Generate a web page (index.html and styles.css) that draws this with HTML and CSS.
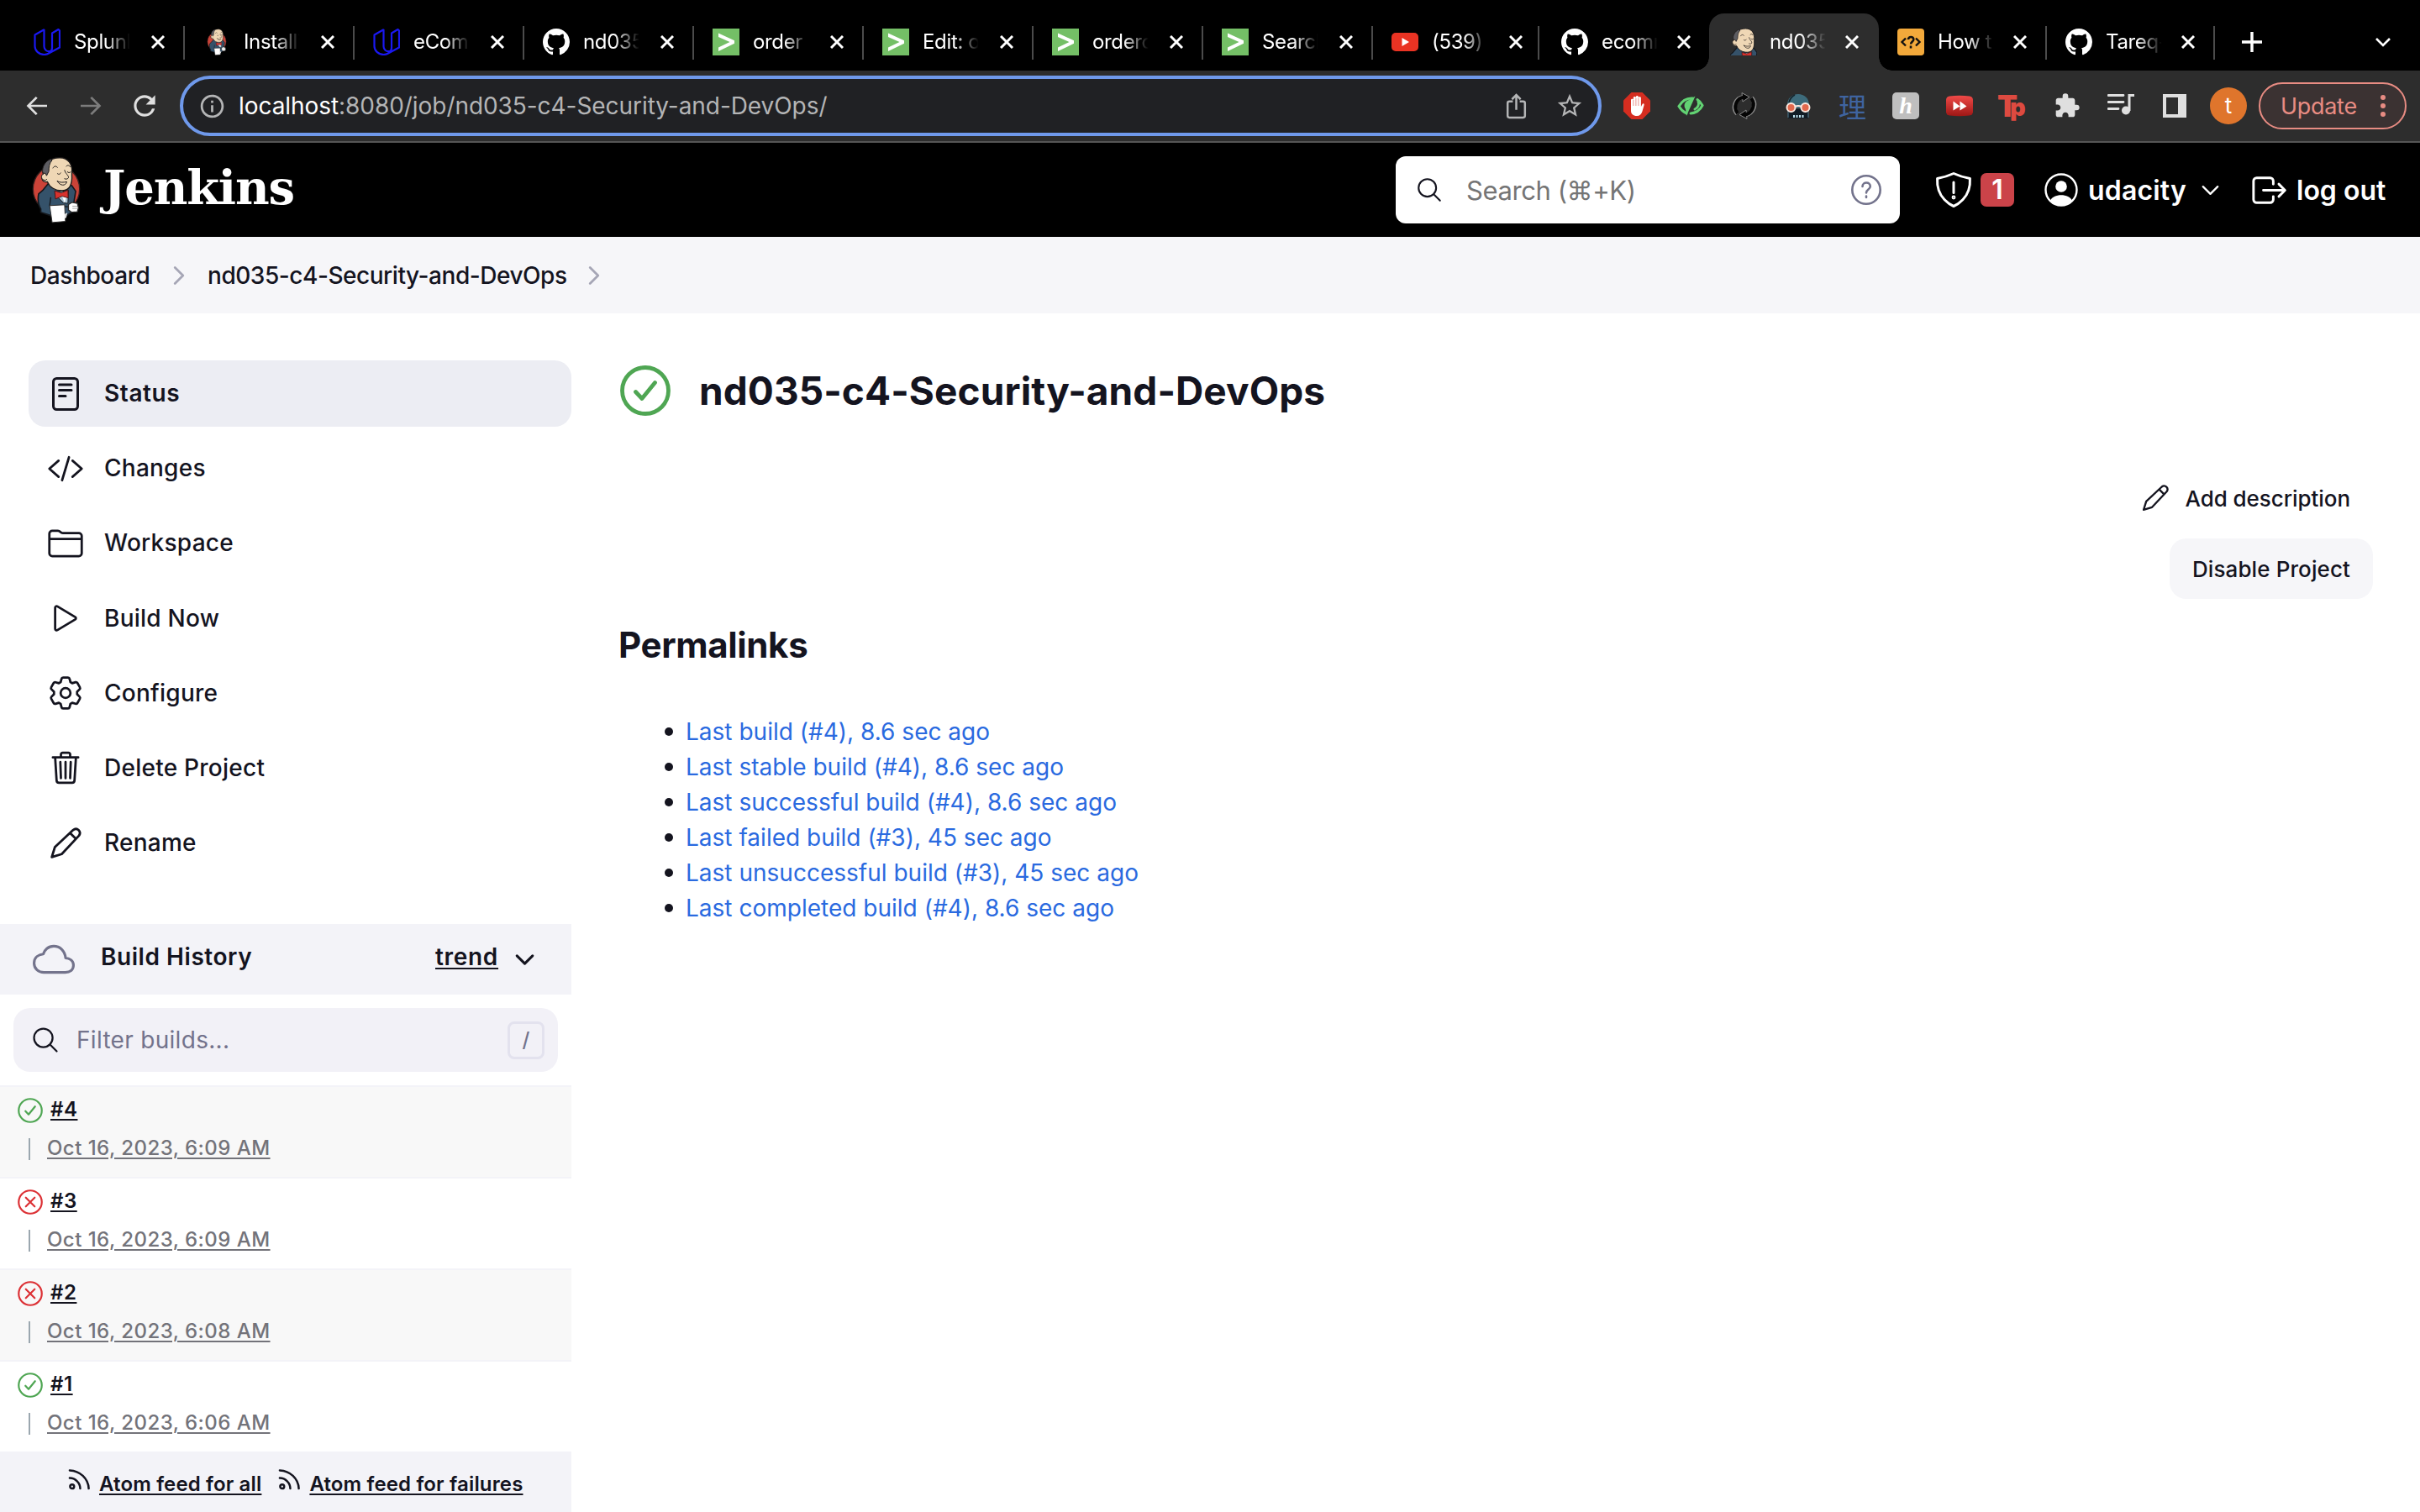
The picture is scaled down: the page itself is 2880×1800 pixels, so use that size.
FILE: index.html
```html
<!DOCTYPE html>
<html lang="en">
<head>
<meta charset="utf-8">
<title>nd035-c4-Security-and-DevOps [Jenkins]</title>
<link rel="stylesheet" href="styles.css">
</head>
<body>
<svg class="sprite" aria-hidden="true">
  <symbol id="udacity" viewBox="0 0 32 32"><path d="M12 1.500L1.500 7.500V21c0 5 4.500 10 11 10 2 0 4-.6 5.500-1.500L31 22.500V2.500L29.500 1 22 5.500v18c0 2-2 3.700-4 3.700s-5.500-2-5.500-6V1.500zM18 29.500c2.500-1.500 4-4 4-7" fill="none" stroke="#1a18f0" stroke-width="2.200" stroke-linejoin="round"/></symbol>
  <symbol id="github" viewBox="0 0 16 16"><path fill="#fff" d="M8 0C3.580 0 0 3.580 0 8c0 3.540 2.290 6.530 5.470 7.590.4.070.55-.17.55-.38 0-.19-.01-.82-.01-1.490-2.010.37-2.530-.49-2.690-.94-.09-.23-.48-.94-.82-1.130-.28-.15-.68-.52-.01-.53.630-.01 1.080.58 1.230.82.720 1.210 1.870.87 2.330.66.070-.52.280-.87.510-1.070-1.780-.2-3.640-.89-3.640-3.950 0-.87.310-1.590.820-2.150-.08-.2-.36-1.020.080-2.120 0 0 .67-.21 2.200.82.640-.18 1.320-.27 2-.27.680 0 1.360.09 2 .27 1.530-1.040 2.200-.82 2.200-.82.440 1.100.160 1.920.080 2.120.510.56.820 1.270.820 2.150 0 3.070-1.870 3.750-3.650 3.950.290.25.540.73.540 1.480 0 1.070-.01 1.930-.01 2.200 0 .21.150.46.550.38A8.013 8.013 0 0016 8c0-4.420-3.580-8-8-8z"/></symbol>
  <symbol id="splunk" viewBox="0 0 32 32"><path fill="#74bf66" d="M0 0h32v32H0z"/><path d="M7 5.500l19 8.700v3.600L7 27v-4.500L20.500 16 7 10z" fill="#fff"/></symbol>
  <symbol id="youtube" viewBox="0 0 32 32"><rect y="5" width="32" height="22" rx="5" fill="#ea3323"/><path d="M12.500 11v10l8.500-5z" fill="#fff"/></symbol>
  <symbol id="howto" viewBox="0 0 32 32"><rect width="32" height="32" rx="4" fill="#f2a93b"/><g fill="none" stroke="#111" stroke-width="2.400"><path d="M10 11.500L5.500 16l4.500 4.500M22 11.500l4.500 4.500-4.500 4.500"/><path d="M13 13c0-4 6.500-4 6.300 0-.1 2.500-3.200 2.500-3.200 5.500M16 20.500v3" stroke-width="2.600"/></g></symbol>
  <symbol id="butler" viewBox="54 28 176 242">
    <ellipse class="disc" cx="142" cy="146" rx="84" ry="86"/>
    <path d="M92 152l-14 12c-4 24 0 42 8 54v12l36 12h58l20-14 12-74-14-20-26-12-60 6z" fill="#35526a" stroke="#15181d" stroke-width="5" stroke-linejoin="round"/>
    <path d="M122 176l-4 30 66 4" fill="none" stroke="#15181d" stroke-width="4"/>
    <path d="M140 158l46-8-2 48-16-2-22-22z" fill="#a9c3d4" stroke="#15181d" stroke-width="3"/>
    <path d="M160 164l12 32 10-34z" fill="#fff"/>
    <path d="M94 92c0-34 22-59 60-59 32 0 48 24 44 60 2 34-6 58-34 59-26 1-46-12-54-32-16 4-24-12-19-22z" fill="#efd7b5" stroke="#1d1a1a" stroke-width="4"/>
    <path d="M93 88c-4-20 8-42 28-50l6 4c-10 10-12 24-12 40l-8 16-4-8z" fill="#5d5d62" stroke="#1d1a1a" stroke-width="3"/>
    <path d="M96 92c-10 2-9 18 0 21 5 3 10 1 12-3" fill="#efd7b5" stroke="#1d1a1a" stroke-width="3"/>
    <path d="M130 70c4-8 12-8 16-2M178 64c4-6 12-4 14 2M146 90c4 4 8 4 12-2M182 84c4 4 8 4 12 0M172 78c2 12 16 20 14 27-3 6-10 6-14 4M146 118c10 6 22 4 34 2-4 16-24 16-34-2z" fill="none" stroke="#1d1a1a" stroke-width="3" stroke-linecap="round"/>
    <path d="M136 152l24 8 24-10 1 28-22-6-24 10z" fill="#d8322e" stroke="#4a1515" stroke-width="3" stroke-linejoin="round"/>
    <path d="M118 206l54-3 3 60-48 4z" fill="#fff" stroke="#2a2a2a" stroke-width="3"/>
    <path d="M172 236l10-4-4 18-6 2z" fill="#ddd"/>
    <path d="M186 202l12-8 20 4 4 16-4 14-20 2-12-8z" fill="#fff" stroke="#2a2a2a" stroke-width="4"/><path d="M200 208h18M200 216h18" stroke="#777" stroke-width="2"/>
  </symbol>
  <symbol id="back" viewBox="0 0 24 24"><path d="M21 11H6.500l6-6L11 3.700 2.700 12l8.300 8.300 1.500-1.300-6-6H21z"/></symbol>
  <symbol id="reload" viewBox="0 0 24 24"><path d="M17.650 6.350A7.958 7.958 0 0012 4c-4.420 0-7.990 3.580-7.990 8s3.570 8 7.990 8c3.730 0 6.840-2.550 7.730-6h-2.080A5.990 5.990 0 0112 18c-3.310 0-6-2.690-6-6s2.690-6 6-6c1.660 0 3.140.69 4.220 1.780L13 11h7V4l-2.350 2.350z"/></symbol>
  <symbol id="info" viewBox="0 0 24 24"><path d="M11 7h2v2h-2zm0 4h2v6h-2zm1-9C6.480 2 2 6.480 2 12s4.480 10 10 10 10-4.480 10-10S17.520 2 12 2zm0 18c-4.410 0-8-3.590-8-8s3.590-8 8-8 8 3.590 8 8-3.590 8-8 8z"/></symbol>
  <symbol id="star" viewBox="0 0 24 24"><path d="M22 9.240l-7.190-.62L12 2 9.190 8.630 2 9.240l5.460 4.730L5.820 21 12 17.270 18.180 21l-1.630-7.030L22 9.240zM12 15.400l-3.760 2.270 1-4.280-3.320-2.880 4.380-.38L12 6.100l1.710 4.040 4.380.38-3.320 2.880 1 4.280L12 15.400z"/></symbol>
  <symbol id="share" viewBox="0 0 32 32"><path d="M12 10.500H8c-1.200 0-2 .8-2 2V27c0 1.200.8 2 2 2h16c1.200 0 2-.8 2-2V12.500c0-1.200-.8-2-2-2h-4M16 20V3.500M11 8l5-5 5 5" fill="none" stroke="currentColor" stroke-width="2.400"/></symbol>
  <symbol id="block" viewBox="0 0 32 32"><path d="M9.500 0h13L32 9.500v13L22.500 32h-13L0 22.500v-13z" fill="#d52d20"/><path d="M9 17V9c0-1.800 2.800-1.800 2.800 0V6.500c0-2 3-2 3 0v-1c0-2 3.100-2 3.100 0v1.200c0-1.800 3-1.800 3 0V17l1.500-2.800c.8-1.600 2.600-.8 2.200.8L22.500 22.500C21.500 26 19.500 28 16 28c-4.500 0-7-2.500-7-6z" fill="#fff"/><path d="M11.900 9v7M14.900 7v9M17.900 7v9" stroke="#d52d20" stroke-width=".5"/></symbol>
  <symbol id="eye" viewBox="0 0 32 32"><g fill="none" stroke="#62d273" stroke-width="3" stroke-linecap="round"><path d="M11 25C7 23 4 20 2 16.500 6 9.500 12 6.500 18.500 7M24 8.500c2.500 1.500 4.500 4 6 7-3 6-8 9-14 9.500M25 11c1.500 3 0 7-4 9"/></g><path d="M21.500 4.500L11 28l-1-8c-3-5-1-9 4-11z" fill="#62d273"/></symbol>
  <symbol id="cycle" viewBox="0 0 32 32"><g stroke="#8a8a8a" stroke-width="5.200" fill="none"><path d="M7.500 25.500A12 12 0 0115 5.500M24.500 6.500A12 12 0 0117 26.500"/></g><path d="M13 .5l9 5-8 5.500zM19 31.500l-9-5 8-5.500z" fill="#050505" stroke="#8a8a8a"/><g stroke="#050505" stroke-width="4" fill="none"><path d="M8 25A12 12 0 0116 5.500M24 7A12 12 0 0116 26.500"/></g></symbol>
  <symbol id="goggles" viewBox="0 0 32 32"><path d="M3 15C3 7 9 2 16 2s13 5 13 13l-1 4H4z" fill="#3d6b7b"/><path d="M5 12c1-4 3-7 7-9" stroke="#16232b" stroke-width="1.500" fill="none"/><path d="M4 20h24v11H4z" fill="#111c25"/><path d="M4 30V19M28 30V19" stroke="#527d91"/><circle cx="7.500" cy="18" r="5" fill="#e2694e" stroke="#fbe8df" stroke-width="2"/><circle cx="24.500" cy="18" r="5" fill="#e2694e" stroke="#fbe8df" stroke-width="2"/><path d="M12 17q4-2 8 0" stroke="#fbe8df" stroke-width="2" fill="none"/><path d="M10 28.500h13" stroke="#bde1ee" stroke-width="3" stroke-dasharray="2 1.500"/></symbol>
  <symbol id="forward2" viewBox="0 0 32 32"><defs><linearGradient id="red" x2="0" y2="1"><stop stop-color="#f04a48"/><stop offset="1" stop-color="#9d1715"/></linearGradient></defs><path d="M4 4.500q12-1.500 24 0 3.500.5 4 4v15q-.5 3.500-4 4-12 1.500-24 0-3.500-.5-4-4v-15q.5-3.500 4-4z" fill="url(#red)"/><path d="M8.500 10.500v11l8-5zM16.500 10.500v11l8-5z" fill="#fff"/></symbol>
  <symbol id="puzzle" viewBox="0 0 24 24"><path d="M20.500 11H19V7c0-1.100-.9-2-2-2h-4V3.500a2.500 2.500 0 0 0-5 0V5H4c-1.100 0-1.990.9-1.990 2v3.800H3.500c1.490 0 2.700 1.210 2.700 2.700s-1.210 2.700-2.700 2.700H2V20c0 1.100.9 2 2 2h3.800v-1.500c0-1.490 1.210-2.700 2.700-2.700 1.490 0 2.700 1.210 2.700 2.700V22H17c1.100 0 2-.9 2-2v-4h1.500a2.500 2.500 0 0 0 0-5z"/></symbol>
  <symbol id="queue" viewBox="0 0 32 32"><path d="M1 3.500h18M1 11.500h18M1 19.500h12" stroke="currentColor" stroke-width="2.800" stroke-linecap="round"/><circle cx="22" cy="21.500" r="5"/><path d="M26 22V3.500h6" fill="none" stroke="currentColor" stroke-width="3"/></symbol>
  <symbol id="panel" viewBox="0 0 28 28"><path fill-rule="evenodd" d="M0 0h28v28H0zM4 4v20h14V4z"/></symbol>
  <symbol id="search" viewBox="0 0 512 512"><path d="M221.090 64a157.090 157.090 0 10157.090 157.090A157.100 157.100 0 00221.090 64zM338.290 338.290L448 448"/></symbol>
  <symbol id="shield" viewBox="0 0 512 512"><path d="M463.100 112.370C373.680 96.330 336.710 84.450 256 48c-80.710 36.450-117.680 48.330-207.100 64.370C32.700 369.130 240.580 457.790 256 464c15.420-6.210 223.300-94.870 207.100-351.630zM256 160v132"/><circle cx="256" cy="352" r="10"/></symbol>
  <symbol id="user" viewBox="0 0 40 40"><circle cx="20" cy="20" r="18.500" fill="none" stroke="#fff" stroke-width="2.400"/><circle cx="20" cy="16" r="6.800" fill="#fff"/><path d="M7 33c3-9 23-9 26 0-6 7-20 7-26 0z" fill="#fff"/></symbol>
  <symbol id="logout" viewBox="0 0 512 512"><path d="M320 176v-40a40 40 0 00-40-40H104a40 40 0 00-40 40v240a40 40 0 0040 40h176a40 40 0 0040-40v-40M392 176l80 80-80 80M191 256h273"/></symbol>
  <symbol id="down" viewBox="0 0 512 512"><path d="M112 184l144 144 144-144"/></symbol>
  <symbol id="right" viewBox="0 0 512 512"><path d="M184 112l144 144-144 144"/></symbol>
  <symbol id="help" viewBox="0 0 36 36"><circle cx="18" cy="18" r="16.700"/><path d="M13.500 14c0-6 9.500-6 9.300 0-.2 3.500-4.800 3.500-4.800 7.500M18 25.500v1.500"/></symbol>
  <symbol id="doc" viewBox="0 0 44 44"><rect x="7.500" y="3.500" width="29" height="37" rx="4"/><path d="M14.500 11h14.500M14.500 17.500h14.500M14.500 24.500h7.500"/></symbol>
  <symbol id="code" viewBox="0 0 512 512"><path d="M160 368L32 256l128-112M352 368l128-112-128-112M304 96l-96 320"/></symbol>
  <symbol id="folder" viewBox="0 0 512 512"><path d="M440 432H72a40 40 0 01-40-40V120a40 40 0 0140-40h75.890a40 40 0 0122.190 6.720l27.840 18.560a40 40 0 0022.190 6.720H440a40 40 0 0140 40v240a40 40 0 01-40 40zM32 192h448"/></symbol>
  <symbol id="play" viewBox="0 0 512 512"><path d="M112 111v290c0 17.440 17 28.520 31 20.160l247.900-148.370c12.120-7.250 12.120-26.330 0-33.580L143 90.840c-14-8.360-31 2.720-31 20.160z"/></symbol>
  <symbol id="gear" viewBox="0 0 512 512"><circle cx="256" cy="256" r="68"/><path d="M200 60q4-18 22-18h68q18 0 22 18l12 46 24 14 46-13q17-5 26 10l34 59q9 16-4 29l-34 33v36l34 33q13 13 4 29l-34 59q-9 15-26 10l-46-13-24 14-12 46q-4 18-22 18h-68q-18 0-22-18l-12-46-24-14-46 13q-17 5-26-10l-34-59q-9-16 4-29l34-33v-36l-34-33q-13-13-4-29l34-59q9-15 26-10l46 13 24-14z"/></symbol>
  <symbol id="trash" viewBox="0 0 512 512"><path d="M112 112l20 320c.95 18.490 14.400 32 32 32h184c17.670 0 30.870-13.510 32-32l20-320M80 112h352M192 112V72a23.930 23.930 0 0124-24h80a23.930 23.930 0 0124 24v40M256 176v224M184 176l8 224M328 176l-8 224"/></symbol>
  <symbol id="pencil" viewBox="0 0 44 44"><path d="M4 40l4-13L32 4.500c5-4 11.500 2 7.500 7.500L17 36zM28 8.500l7.500 7.500"/></symbol>
  <symbol id="cloud" viewBox="0 0 512 512"><path d="M400 240c-8.890-89.540-71-144-144-144-69 0-113.440 48.200-128 96-60 6-112 43.590-112 112 0 66 54 112 120 112h260c55 0 100-27.440 100-88 0-59.820-53-85.760-96-88z"/></symbol>
  <symbol id="ok" viewBox="0 0 60 60"><circle cx="30" cy="30" r="27.500"/><path d="M18.500 31.500l7.500 8L41.500 20.500"/></symbol>
  <symbol id="fail" viewBox="0 0 60 60"><circle cx="30" cy="30" r="27.500"/><path d="M19.500 19.500l21 21M40.500 19.500l-21 21"/></symbol>
  <symbol id="rss" viewBox="0 0 28 28"><circle cx="5" cy="22.500" r="2.500"/><path d="M2 12c7 0 13 6 13 13M2 2.500C14.500 3 25 12.500 25.500 25"/></symbol>
  <symbol id="x" viewBox="0 0 16 16"><path d="M1 1l14 14M15 1L1 15" stroke="#fff" stroke-width="3"/></symbol>
</svg>

<div class="tabs">
  <div class="tab"><svg><use href="#udacity"/></svg><span>Splunk</span><svg class="close"><use href="#x"/></svg></div>
  <div class="tab"><svg><use href="#butler"/></svg><span>Installi</span><svg class="close"><use href="#x"/></svg></div>
  <div class="tab"><svg><use href="#udacity"/></svg><span>eCom</span><svg class="close"><use href="#x"/></svg></div>
  <div class="tab"><svg><use href="#github"/></svg><span>nd035</span><svg class="close"><use href="#x"/></svg></div>
  <div class="tab"><svg><use href="#splunk"/></svg><span>order</span><svg class="close"><use href="#x"/></svg></div>
  <div class="tab"><svg><use href="#splunk"/></svg><span>Edit: o</span><svg class="close"><use href="#x"/></svg></div>
  <div class="tab"><svg><use href="#splunk"/></svg><span>orderc</span><svg class="close"><use href="#x"/></svg></div>
  <div class="tab"><svg><use href="#splunk"/></svg><span>Search</span><svg class="close"><use href="#x"/></svg></div>
  <div class="tab"><svg><use href="#youtube"/></svg><span>(539)</span><svg class="close"><use href="#x"/></svg></div>
  <div class="tab narrow plain"><svg><use href="#github"/></svg><span>ecomm</span><svg class="close"><use href="#x"/></svg></div>
  <div class="tab narrow plain active"><svg class="face" viewBox="77 33 135 135"><use href="#butler" x="54" y="28" width="176" height="242"/></svg><span>nd035</span><svg class="close"><use href="#x"/></svg></div>
  <div class="tab narrow"><svg><use href="#howto"/></svg><span>How t</span><svg class="close"><use href="#x"/></svg></div>
  <div class="tab narrow"><svg><use href="#github"/></svg><span>Tareq-</span><svg class="close"><use href="#x"/></svg></div>
  <svg class="new-tab" viewBox="0 0 24 24"><path d="M12 0v24M0 12h24" stroke="#fff" stroke-width="3.400"/></svg>
  <svg class="tab-list" viewBox="0 0 18 12"><path d="M1 2l8 8 8-8" fill="none" stroke="#fff" stroke-width="2.600"/></svg>
</div>

<div class="toolbar">
  <svg class="tool"><use href="#back"/></svg>
  <svg class="tool dim flip"><use href="#back"/></svg>
  <svg class="tool big"><use href="#reload"/></svg>
  <div class="omnibox">
    <svg><use href="#info"/></svg>
    <span class="url"><b>localhost</b>:8080/job/nd035-c4-Security-and-DevOps/</span>
    <svg><use href="#share"/></svg>
    <svg class="fav"><use href="#star"/></svg>
  </div>
  <div class="extensions">
    <svg><use href="#block"/></svg>
    <svg><use href="#eye"/></svg>
    <svg><use href="#cycle"/></svg>
    <svg><use href="#goggles"/></svg>
    <span class="kanji">理</span>
    <span class="honey">h</span>
    <svg><use href="#forward2"/></svg>
    <span class="tp">T<i>p</i></span>
    <svg><use href="#puzzle"/></svg>
    <svg><use href="#queue"/></svg>
    <svg class="panel"><use href="#panel"/></svg>
  </div>
  <span class="avatar">t</span>
  <div class="update">Update<svg viewBox="0 0 6 28"><circle cx="3" cy="4" r="3"/><circle cx="3" cy="14" r="3"/><circle cx="3" cy="24" r="3"/></svg></div>
</div>

<header class="header">
  <svg class="mascot"><use href="#butler"/></svg>
  <span class="wordmark">Jenkins</span>
  <div class="search"><svg class="line"><use href="#search"/></svg><span>Search (⌘+K)</span><svg class="line help"><use href="#help"/></svg></div>
  <svg class="line shield"><use href="#shield"/></svg>
  <span class="badge">1</span>
  <svg class="user"><use href="#user"/></svg>
  <span class="user-name">udacity</span>
  <svg class="line user-down"><use href="#down"/></svg>
  <svg class="line logout"><use href="#logout"/></svg>
  <span class="logout-text">log out</span>
</header>

<nav class="crumbs">
  <span class="c1">Dashboard</span><svg class="line"><use href="#right"/></svg>
  <span class="c2">nd035-c4-Security-and-DevOps</span><svg class="line"><use href="#right"/></svg>
</nav>

<div class="page">
  <aside class="side">
    <div class="tasks">
      <a class="task current"><svg class="line doc"><use href="#doc"/></svg>Status</a>
      <a class="task"><svg class="line"><use href="#code"/></svg>Changes</a>
      <a class="task"><svg class="line"><use href="#folder"/></svg>Workspace</a>
      <a class="task"><svg class="line"><use href="#play"/></svg>Build Now</a>
      <a class="task"><svg class="line"><use href="#gear"/></svg>Configure</a>
      <a class="task"><svg class="line"><use href="#trash"/></svg>Delete Project</a>
      <a class="task"><svg class="line pen"><use href="#pencil"/></svg>Rename</a>
    </div>
    <div class="history-head"><svg class="line cloud"><use href="#cloud"/></svg><h3>Build History</h3><a>trend</a><svg class="line chev"><use href="#down"/></svg></div>
    <div class="filter"><svg class="line"><use href="#search"/></svg><span>Filter builds...</span><kbd>/</kbd></div>
    <div class="builds">
      <div class="build"><div><svg class="line ok"><use href="#ok"/></svg><a>#4</a></div><p><a>Oct 16, 2023, 6:09 AM</a></p></div>
      <div class="build"><div><svg class="line fail"><use href="#fail"/></svg><a>#3</a></div><p><a>Oct 16, 2023, 6:09 AM</a></p></div>
      <div class="build"><div><svg class="line fail"><use href="#fail"/></svg><a>#2</a></div><p><a>Oct 16, 2023, 6:08 AM</a></p></div>
      <div class="build"><div><svg class="line ok"><use href="#ok"/></svg><a>#1</a></div><p><a>Oct 16, 2023, 6:06 AM</a></p></div>
    </div>
    <div class="feeds"><svg class="line"><use href="#rss"/></svg><a class="f1">Atom feed for all</a><svg class="line"><use href="#rss"/></svg><a>Atom feed for failures</a></div>
  </aside>
  <main class="main">
    <h1><svg class="line ok"><use href="#ok"/></svg>nd035-c4-Security-and-DevOps</h1>
    <div class="actions">
      <a class="describe"><svg class="line"><use href="#pencil"/></svg>Add description</a>
      <a class="disable">Disable Project</a>
    </div>
    <h2>Permalinks</h2>
    <ul>
      <li><a>Last build (#4), 8.6 sec ago</a></li>
      <li><a>Last stable build (#4), 8.6 sec ago</a></li>
      <li><a>Last successful build (#4), 8.6 sec ago</a></li>
      <li><a>Last failed build (#3), 45 sec ago</a></li>
      <li><a>Last unsuccessful build (#3), 45 sec ago</a></li>
      <li><a>Last completed build (#4), 8.6 sec ago</a></li>
    </ul>
  </main>
</div>
</body>
</html>
```
FILE: styles.css
```css
* { box-sizing: border-box; }
body { margin: 0; width: 2880px; height: 1800px; overflow: hidden; background: #fff; color: #14141f; font-family: Inter, "Noto Sans", sans-serif; white-space: nowrap; }
h1, h2, h3, p, ul { margin: 0; padding: 0; }
svg { flex: none; display: block; overflow: visible; }
.sprite { position: absolute; width: 0; height: 0; }
.line { fill: none; stroke: currentColor; stroke-width: 32; stroke-linecap: round; stroke-linejoin: round; }
.disc { fill: var(--disc, #cc4338); stroke: var(--disc, #35201f); stroke-width: 4px; }

/* browser tabs */
.tabs { display: flex; height: 84px; padding-left: 20px; background: #000; color: #fff; }
.tab { position: relative; display: flex; align-items: center; width: 202px; height: 84px; padding: 16px 0 0 20px; }
.tab.narrow { width: 200px; }
.tab svg { width: 32px; height: 32px; }
.tab:not(.plain)::after { content: ""; position: absolute; right: 2px; top: 31px; width: 2px; height: 40px; background: #4b4b4b; }
.tab:nth-child(9)::after { right: 6px; }
.tab span { width: 68px; margin-left: 16px; overflow: hidden; font-size: 24px; line-height: 32px; letter-spacing: -.35px; -webkit-mask-image: linear-gradient(90deg, #000 55%, transparent 98%); mask-image: linear-gradient(90deg, #000 55%, transparent 98%); }
.tab svg.close { width: 16px; height: 16px; margin-left: 24px; }
.narrow svg.close { margin-left: 22px; }
.active { isolation: isolate; }
.tab svg.face { --disc: transparent; margin-left: 1px; overflow: hidden; }
.active span { margin-left: 15px; }
.active::before { content: ""; position: absolute; z-index: -1; left: -4px; top: 16px; width: 202px; height: 68px; border-radius: 18px 18px 0 0; background: #2d2d2d; }
.active::after { content: ""; position: absolute; z-index: -1; left: -20px; top: 68px; width: 234px; height: 16px; background: radial-gradient(circle at 0 0, transparent 15.5px, #2d2d2d 16px) left / 16px 16px no-repeat, radial-gradient(circle at 100% 0, transparent 15.5px, #2d2d2d 16px) right / 16px 16px no-repeat; }
.new-tab { width: 24px; height: 24px; margin: 38px 0 0 30px; }
.tab-list { width: 18px; height: 12px; margin: 44px 0 0 135px; }

/* browser toolbar */
.toolbar { display: flex; align-items: center; height: 86px; padding-left: 28px; background: #2d2d2d; border-bottom: 2px solid #555; color: #dfdfdf; fill: currentColor; }
.tool { width: 32px; height: 32px; margin-right: 32px; }
.tool.dim { color: #7c7c7c; }
.tool.flip { transform: scaleX(-1); }
.tool.big { width: 38px; height: 38px; margin: 0 23px 0 -3px; }
.omnibox { display: flex; align-items: center; width: 1692px; height: 72px; padding-left: 18px; border: 4px solid #6f99eb; border-radius: 36px; background: #202124; color: #b4b5b6; font-size: 28px; }
.omnibox svg { width: 33px; height: 33px; }
.url { width: 1504px; margin-left: 15px; letter-spacing: -.060px; }
.url b { font-weight: 400; color: #fff; }
.omnibox svg.fav { width: 34px; height: 34px; margin-left: 30px; }
.extensions { display: flex; align-items: center; gap: 32px; margin-left: 26px; }
.extensions svg, .extensions span { width: 32px; height: 32px; line-height: 32px; text-align: center; }
.extensions svg.panel { width: 28px; height: 28px; margin: 0 2px; }
.kanji { color: #3f64a0; font-size: 33px; font-family: "Noto Sans CJK JP", sans-serif; }
.honey { border-radius: 5px; background: #bfbfbf; color: #fff; font: italic bold 28px "Liberation Serif", serif; }
.extensions .tp { display: flex; color: #dd4a40; font-size: 35px; font-weight: 900; letter-spacing: -2px; text-indent: -3px; }
.tp i { margin-left: -4px; font-style: normal; font-size: 29px; line-height: 36px; }
.avatar { width: 44px; height: 44px; margin-left: 26px; border-radius: 50%; background: #df752c; color: #fff; font-size: 26px; line-height: 43px; text-align: center; }
.update { display: flex; align-items: center; width: 176px; height: 56px; margin-left: 14px; padding-left: 24px; border: 2px solid #e88c83; border-radius: 28px; background: #3b3232; color: #e88c83; font-size: 27px; letter-spacing: -.3px; }
.update svg { width: 6px; height: 28px; margin-left: 28px; }

/* Jenkins header */
.header { display: flex; align-items: center; height: 112px; padding-left: 38px; background: #000; color: #fff; font-size: 32px; font-weight: 600; }
.mascot { width: 58px; height: 80px; }
.wordmark { width: 237px; margin: -6px 0 0 27px; font: bold 56px "DejaVu Serif", serif; letter-spacing: -1.200px; }
.search { display: flex; align-items: center; width: 600px; height: 80px; margin-left: 1301px; padding-left: 23px; border-radius: 12px; background: #fff; color: #757575; font-weight: 400; }
.search svg { width: 34px; height: 34px; margin-top: -1px; color: #14141f; }
.search span { width: 458px; margin-left: 27px; font-size: 31px; letter-spacing: -.42px; }
.search svg.help { width: 36px; height: 36px; color: #73738c; stroke-width: 2.600; }
.shield { width: 48px; height: 48px; margin-left: 40px; }
.badge { width: 40px; height: 40px; margin-left: 8px; border-radius: 7px; background: #cb4349; line-height: 40px; text-align: center; }
.user { width: 40px; height: 40px; margin-left: 36px; }
.user-name { width: 136px; margin-left: 12px; letter-spacing: .18px; }
.user-down { width: 31px; height: 31px; margin-left: -6px; stroke-width: 38; }
.logout { width: 47px; height: 47px; margin-left: 30px; }
.logout-text { margin-left: 10px; }

/* breadcrumbs */
.crumbs { display: flex; align-items: center; height: 91px; padding-left: 36px; background: #f6f6f9; font-size: 28px; font-weight: 500; }
.c1 { width: 160px; letter-spacing: -.4px; }
.c2 { width: 443px; margin-left: 17px; letter-spacing: -.46px; }
.crumbs svg { width: 34px; height: 34px; color: #a6a6b6; stroke-width: 42; }

.page { display: flex; height: 1427px; }
.side { width: 680px; }

/* task list */
.tasks { display: flex; flex-direction: column; gap: 10.200px; height: 727px; padding: 56px 0 0 34px; }
.task { display: flex; align-items: center; height: 79px; padding-left: 22px; border-radius: 20px; font-size: 28px; font-weight: 500; letter-spacing: .25px; line-height: 35px; }
.task svg { width: 44px; height: 44px; margin-right: 24px; }
.task svg.doc { stroke-width: 3; }
.task svg.pen { width: 40px; height: 40px; margin: 0 26px 0 2px; stroke-width: 3.100; }
.current { background: #ecedf3; font-weight: 600; letter-spacing: .6px; }

/* build history */
.history-head { display: flex; align-items: center; height: 84px; padding-left: 39px; background: #f3f3f8; font-size: 28px; font-weight: 600; }
.cloud { width: 50px; height: 50px; color: #73738c; }
.history-head h3 { width: 398px; margin-left: 31px; padding-bottom: 6px; font-size: 28px; font-weight: 600; letter-spacing: .55px; }
.history-head a { width: 75px; padding-bottom: 6px; letter-spacing: .7px; }
.history-head .chev { width: 33px; height: 33px; margin-left: 15px; stroke-width: 48; }
.history-head a, .build a, .feeds a { text-decoration: underline; text-decoration-thickness: 2px; text-underline-offset: 3px; }
.filter { display: flex; align-items: center; height: 76px; margin: 16px; padding: 0 16px 0 20px; border-radius: 20px; background: #f2f1f7; color: #73738c; font-size: 28px; letter-spacing: .3px; }
.filter svg { width: 36px; height: 36px; color: #14141f; }
.filter span { flex: 1; margin-left: 19px; }
.filter kbd { width: 44px; height: 45px; border: 3px solid #e3e2ee; border-radius: 8px; font: 500 24px/38px Inter, sans-serif; text-align: center; }
.build { height: 109px; padding-top: 10px; border-top: 2px solid #f3f3f8; font-size: 24px; }
.build:nth-child(odd) { background: #f8f8f8; }
.build div { display: flex; align-items: center; height: 36px; padding-left: 21px; font-weight: 600; letter-spacing: .5px; }
.build svg { width: 30px; height: 30px; margin-right: 9px; stroke-width: 4.400; }
.build div a { margin-top: -3px; }
.build p { display: flex; align-items: center; height: 26px; margin: 15px 0 0 34px; padding-left: 20px; border-left: 2px solid #9ba7af; color: #73737a; font-weight: 500; letter-spacing: .46px; line-height: 30px; }
.build p a { margin-top: -3px; }
.feeds { display: flex; align-items: center; height: 72px; padding: 5px 0 0 81px; background: #f3f3f8; font-size: 24px; font-weight: 600; letter-spacing: .15px; }
.feeds svg { width: 27px; height: 27px; margin: -11px 10px 0 0; stroke-width: 2.600; }
.feeds .f1 { margin-right: 20px; }
.ok { color: #4fa653; }
.fail { color: #dc3135; }

/* project */
.main { flex: 1; padding: 62px 56px 0 58px; }
.main h1 { display: flex; align-items: center; height: 60px; font-size: 46px; font-weight: 700; letter-spacing: .1px; }
.main h1 svg { width: 60px; height: 60px; margin-right: 34px; stroke-width: 4.800; }
.actions { display: flex; flex-direction: column; align-items: flex-end; height: 247px; padding-top: 78px; font-size: 26px; font-weight: 500; }
.describe { display: flex; align-items: center; height: 40px; margin-right: 27px; letter-spacing: -.060px; }
.describe svg { width: 34px; height: 34px; margin-right: 18px; stroke-width: 3; }
.disable { height: 72px; margin-top: 28px; padding: 0 27px; border-radius: 20px; background: #f6f6f9; line-height: 73px; letter-spacing: .1px; }
.main h2 { height: 107px; margin-left: -2px; font-size: 42px; font-weight: 700; line-height: 51px; letter-spacing: -.35px; }
.main ul { list-style: none; }
.main li { display: flex; align-items: center; height: 42px; padding: 1px 0 0 53px; font-size: 28px; line-height: 34px; color: #2a6ae0; letter-spacing: .01px; }
.main li::before { content: ""; width: 10px; height: 10px; margin-right: 15px; border-radius: 50%; background: #14141f; }
```
